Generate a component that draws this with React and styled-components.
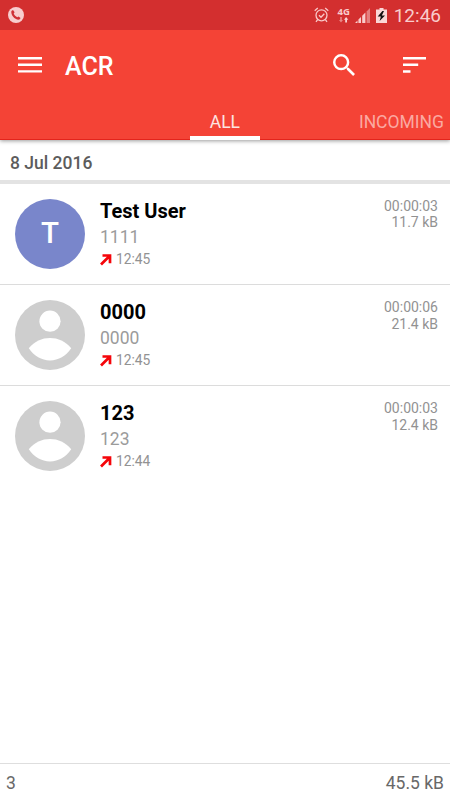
import React from 'react';
import styled, { createGlobalStyle } from 'styled-components';

const calls = [
    { key: 1, name: 'Test User', number: '1111', time: '12:45', duration: '00:00:03', size: '11.7 kB', letter: 'T' },
    { key: 2, name: '0000', number: '0000', time: '12:45', duration: '00:00:06', size: '21.4 kB' },
    { key: 3, name: '123', number: '123', time: '12:44', duration: '00:00:03', size: '12.4 kB' },
];

const StatusBar = () => (
    <StatusBarStyled>
        <svg width="16" height="16" viewBox="0 0 16 16">
            <circle cx="8" cy="8" r="8" fill="#f8cdcf" />
            <path d="M3.4 4.1 5 3.1 6.6 5.3 5.7 6.4C6.4 8 7.7 9.4 9.3 10.2L10.5 9.4 12.6 11 11.5 12.6C7.4 13.5 2.5 8.3 3.4 4.1Z" fill="#cf3036" />
        </svg>
        <StatusIcons>
            <svg width="15" height="16" viewBox="0 0 15 16" fill="none" stroke="#f9c8c8" strokeWidth="1.3">
                <circle cx="7.5" cy="8.3" r="5.5" />
                <path d="M.7 3.7 3.8 1M14.3 3.7 11.2 1M3.6 12.6 2 14.8M11.4 12.6 13 14.8M5 8.2 7 10.2 10.3 6.7" />
            </svg>
            <Network>
                <span>4G</span>
                <svg width="10" height="6" viewBox="0 0 10 6">
                    <path d="M1.2 0H2.8V3H4L2 5.5 0 3H1.2Z" fill="#e98787" />
                    <path d="M6.2 5.5H8V2.7H9.3L7.1 0 5 2.7H6.2Z" fill="#f9d3d3" />
                </svg>
            </Network>
            <svg width="15" height="15" viewBox="0 0 15 15">
                <path d="M0 15 2.5 12.5V15ZM3.4 15V11.6L6 9V15ZM7.2 15V7.8L10.4 4.6V15Z" fill="#f9cccc" />
                <path d="M11.6 15V3.4L15 0V15Z" fill="#e47f7f" />
            </svg>
            <Battery width="11" height="15" viewBox="0 0 11 15">
                <path d="M0 1.5H3.5V0H7.5V1.5H11V15H0Z" fill="#fbd7d7" />
                <path d="M6.4 3 1.7 8.4H4.9L3.6 13 9 7.4H5.8L8 3Z" fill="#141010" />
            </Battery>
            <Clock>12:46</Clock>
        </StatusIcons>
    </StatusBarStyled>
);

const PersonIcon = () => (
    <svg width="70" height="70" viewBox="0 0 70 70">
        <circle cx="35" cy="35" r="35" fill="#cecece" />
        <circle cx="35" cy="21.2" r="10.6" fill="#fff" />
        <path d="M13.8 48.3C19.5 41.3 27 38 35 38S50.5 41.3 56.2 48.3C51 56 43.5 60.4 35 60.4S19 56 13.8 48.3Z" fill="#fff" />
    </svg>
);

const Call = ({ call }) => {
    const { name, number, time, duration, size, letter } = call;
    return (
        <CallStyled>
            {letter ? <Avatar>{letter}</Avatar> : <PersonIcon />}
            <CallInfo>
                <h3>{name}</h3>
                <p>{number}</p>
                <CallTime>
                    <svg width="12" height="12" viewBox="0 0 12 12">
                        <path d="M2.5 1.5H10V9.2M9.8 1.7 1 10.5" fill="none" stroke="#f5050a" strokeWidth="2.7" />
                    </svg>
                    {time}
                </CallTime>
            </CallInfo>
            <CallMeta>
                <div>{duration}</div>
                <div>{size}</div>
            </CallMeta>
        </CallStyled>
    );
};

const App = () => {
    return (
        <>
            <GlobalStyle />
            <Screen>
                <StatusBar />
                <Header>
                    <Toolbar>
                        <svg width="24" height="16" viewBox="0 0 24 16">
                            <path d="M0 0H24V2.4H0ZM0 6.6H24V9H0ZM0 13.2H24V15.6H0Z" fill="#fff" />
                        </svg>
                        <h1>ACR</h1>
                        <svg width="22" height="22" viewBox="3 3 17.5 17.5">
                            <path d="M15.5 14h-.79l-.28-.27A6.47 6.47 0 0 0 16 9.5 6.5 6.5 0 1 0 9.5 16c1.61 0 3.09-.59 4.23-1.57l.27.28v.79l5 4.99L20.49 19l-4.99-5zm-6 0C7.01 14 5 11.99 5 9.5S7.01 5 9.5 5 14 7.01 14 9.5 11.99 14 9.5 14z" fill="#fff" />
                        </svg>
                        <SortIcon width="23" height="16" viewBox="0 0 23 16">
                            <path d="M0 0H23V2.5H0ZM0 6.6H15.2V9.1H0ZM0 13.2H7.5V15.7H0Z" fill="#fff" />
                        </SortIcon>
                    </Toolbar>
                    <Tabs>
                        <Tab $active>ALL</Tab>
                        <Tab>INCOMING</Tab>
                    </Tabs>
                </Header>
                <DateHeading>8 Jul 2016</DateHeading>
                <CallList>
                    {calls.map(call => <Call key={call.key} call={call} />)}
                </CallList>
                <Footer>
                    <span>3</span>
                    <span>45.5 kB</span>
                </Footer>
            </Screen>
        </>
    );
};

const GlobalStyle = createGlobalStyle`
    * {
        box-sizing: border-box;
    }
    body {
        margin: 0;
        background: #fff;
        font-family: Roboto, sans-serif;
    }
    h1, h2, h3, p {
        margin: 0;
    }
    svg {
        display: block;
        flex-shrink: 0;
    }
`;

const Screen = styled.div`
    display: flex;
    flex-direction: column;
    width: 450px;
    height: 800px;
    overflow: hidden;
    background: #fff;
`;

const StatusBarStyled = styled.div`
    display: flex;
    justify-content: space-between;
    align-items: center;
    height: 30px;
    padding: 0 9px 0 8px;
    background: #d32f2f;
    z-index: 2;
`;

const StatusIcons = styled.div`
    display: flex;
    align-items: center;
`;

const Network = styled.div`
    display: flex;
    flex-direction: column;
    align-items: center;
    width: 14px;
    margin: 0 4px 0 8px;
    color: #f9cccc;
    font-family: 'Open Sans', sans-serif;
    font-size: 9.5px;
    font-weight: 700;
    line-height: 9px;
    span {
        margin-bottom: 1px;
    }
`;

const Battery = styled.svg`
    margin: 0 7px 0 6px;
`;

const Clock = styled.span`
    padding-top: 1px;
    color: #f9cccc;
    font-size: 19px;
    line-height: 29px;
`;

const Header = styled.header`
    height: 110px;
    background: #f44336;
    border-bottom: 1px solid #e3241c;
    box-shadow: 0 1px 4px rgba(0, 0, 0, 0.4);
    z-index: 1;
`;

const Toolbar = styled.div`
    display: flex;
    align-items: center;
    height: 70px;
    padding: 0 24px 0 18px;
    h1 {
        flex: 1;
        margin-left: 23px;
        padding-top: 2px;
        color: #fff;
        font-size: 25px;
        font-weight: 500;
    }
`;

const SortIcon = styled.svg`
    margin-left: 48px;
`;

const Tabs = styled.div`
    display: flex;
    justify-content: flex-end;
    gap: 99px;
    height: 40px;
    padding-right: 6px;
`;

const Tab = styled.div`
    width: ${props => props.$active ? '70px' : 'auto'};
    border-bottom: ${props => props.$active ? '4px solid #fff' : 'none'};
    color: ${props => props.$active ? '#fde4e2' : '#fba9a2'};
    font-size: 17.5px;
    line-height: 44px;
    text-align: center;
`;

const DateHeading = styled.h2`
    height: 44px;
    padding-left: 10px;
    border-bottom: 4px solid #e3e3e3;
    color: #5c5c5c;
    font-size: 17.5px;
    font-weight: 500;
    line-height: 46px;
`;

const CallList = styled.div`
    flex: 1;
`;

const CallStyled = styled.div`
    display: flex;
    height: 101.2px;
    padding: 15px 12px 0 15px;
    border-bottom: 1px solid #dcdcdc;
    &:last-child {
        border-bottom: none;
    }
`;

const Avatar = styled.div`
    width: 70px;
    height: 70px;
    border-radius: 50%;
    background: #7986cb;
    color: #fff;
    font-size: 29.5px;
    font-weight: 500;
    line-height: 69px;
    text-align: center;
`;

const CallInfo = styled.div`
    flex: 1;
    margin-left: 15px;
    h3 {
        color: #000;
        font-size: 20px;
        font-weight: 700;
        line-height: 24px;
    }
    p {
        margin-top: 4px;
        color: #9b9b9b;
        font-size: 17.5px;
        font-weight: 400;
        line-height: 21px;
    }
`;

const CallTime = styled.div`
    display: flex;
    align-items: center;
    gap: 4px;
    margin-top: 3px;
    color: #929292;
    font-size: 13.8px;
    line-height: 17px;
`;

const CallMeta = styled.div`
    margin-top: -1px;
    color: #929292;
    font-size: 14px;
    line-height: 16.4px;
    text-align: right;
`;

const Footer = styled.footer`
    display: flex;
    justify-content: space-between;
    height: 37px;
    padding: 0 6px;
    border-top: 1px solid #dedede;
    color: #686868;
    font-size: 17.5px;
    line-height: 38px;
`;

export default App;
